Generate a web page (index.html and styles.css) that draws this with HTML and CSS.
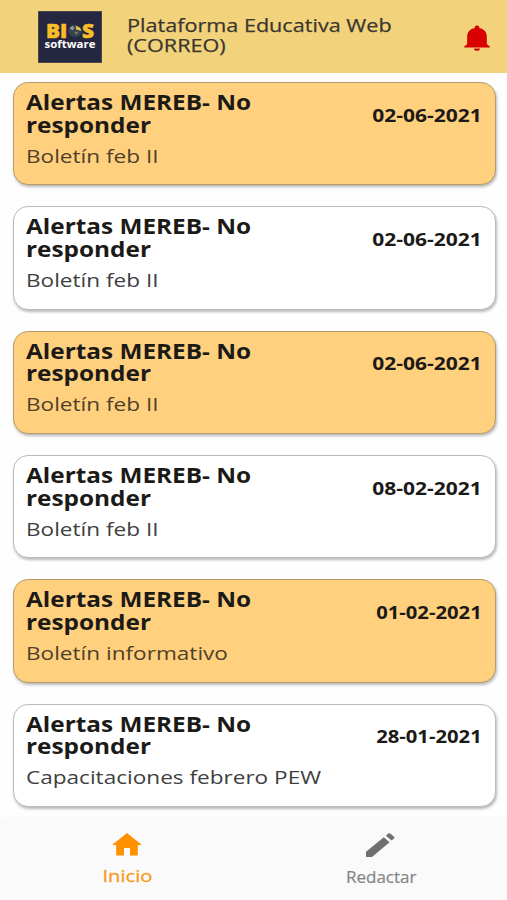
FILE: index.html
```html
<!DOCTYPE html>
<html lang="es">
<head>
    <meta charset="UTF-8">
    <title>Plataforma Educativa Web</title>
    <link rel="stylesheet" href="styles.css">
</head>
<body>
<div class="app">
    <header class="header">
        <div class="logo">
            <div class="bios">
                <span>BI</span>
                <svg class="globe" width="13" height="14" viewBox="0 0 13 13">
                    <circle cx="6.5" cy="6.5" r="6" fill="#34434e"/>
                    <path d="M1.5 3.5L4.5 1L6 4L4 6Z" fill="#8d9597"/>
                    <path d="M7 1L11 3.5L12 6.5L7.5 5Z" fill="#ecc343"/>
                    <path d="M6 7L9.5 7.5L8 10.5L6 9Z" fill="#77745a"/>
                </svg>
                <span>S</span>
            </div>
            <div class="software">software</div>
        </div>
        <h1 class="app-title">Plataforma Educativa Web<br>(CORREO)</h1>
        <svg class="bell" width="26" height="26" viewBox="0 0 26 26">
            <path d="M13 0.5C11.5 0.5 10.7 1.3 10.7 2.5V3C6 4 3.2 7 3.2 11.5V18C3.2 19.5 2.3 20.3 0.2 21.3V22.5H25.8V21.3C23.7 20.3 22.8 19.5 22.8 18V11.5C22.8 7 20 4 15.3 3V2.5C15.3 1.3 14.5 0.5 13 0.5Z"/>
            <path d="M9.8 23.5H16.2C15.9 25 14.7 25.8 13 25.8S10.1 25 9.8 23.5Z"/>
        </svg>
    </header>
    <ul class="list">
        <li class="card unread">
            <div class="info">
                <h2>Alertas MEREB- No<br>responder</h2>
                <p>Boletín feb II</p>
            </div>
            <span class="date">02-06-2021</span>
        </li>
        <li class="card">
            <div class="info">
                <h2>Alertas MEREB- No<br>responder</h2>
                <p>Boletín feb II</p>
            </div>
            <span class="date">02-06-2021</span>
        </li>
        <li class="card unread">
            <div class="info">
                <h2>Alertas MEREB- No<br>responder</h2>
                <p>Boletín feb II</p>
            </div>
            <span class="date">02-06-2021</span>
        </li>
        <li class="card">
            <div class="info">
                <h2>Alertas MEREB- No<br>responder</h2>
                <p>Boletín feb II</p>
            </div>
            <span class="date">08-02-2021</span>
        </li>
        <li class="card unread">
            <div class="info">
                <h2>Alertas MEREB- No<br>responder</h2>
                <p>Boletín informativo</p>
            </div>
            <span class="date short">01-02-2021</span>
        </li>
        <li class="card">
            <div class="info">
                <h2>Alertas MEREB- No<br>responder</h2>
                <p>Capacitaciones febrero PEW</p>
            </div>
            <span class="date short">28-01-2021</span>
        </li>
    </ul>
    <nav class="tabs">
        <a class="tab current">
            <svg width="30" height="23" viewBox="0 0 30 23">
                <path d="M15 0L30 12H25.8V22.6H18V15H12V22.6H4.2V12H0Z"/>
            </svg>
            <span>Inicio</span>
        </a>
        <a class="tab">
            <svg width="29" height="24" viewBox="0 0 29 24">
                <path d="M0 18.7L17.8 4.3L23.6 9.3L6 24H0Z"/>
                <path d="M19.8 2.7L22.3 0.6Q23.2 -0.2 24.3 0.6L28 3.7Q29 4.6 28 5.5L25.6 7.5Z"/>
            </svg>
            <span>Redactar</span>
        </a>
    </nav>
</div>
</body>
</html>
```

FILE: styles.css
```css
* {
    margin: 0;
    padding: 0;
    box-sizing: border-box;
}

ul, li {
    list-style: none;
}

body {
    font-family: "Open Sans", sans-serif;
    background-color: #fefefe;
}

.app {
    display: flex;
    flex-direction: column;
    height: 900px;
    overflow: hidden;
}

.header {
    display: flex;
    flex-shrink: 0;
    align-items: flex-start;
    height: 73px;
    padding: 11px 17px 0 38px;
    background-color: #f2d37b;
}

.logo {
    width: 64px;
    height: 52px;
    padding-top: 11px;
    background-color: #25263f;
    border: 1px solid #4b4848;
}

.bios {
    display: flex;
    align-items: center;
    justify-content: center;
    height: 15px;
    font-size: 18.5px;
    font-weight: 800;
    line-height: 15px;
    color: #f9bd2b;
    -webkit-text-stroke: 0.5px #f9bd2b;
    transform: scaleX(1.13);
}

.software {
    height: 12px;
    font-size: 11px;
    font-weight: 700;
    line-height: 11px;
    text-align: center;
    color: #fff;
    transform: scaleX(1.04);
}

.app-title {
    flex: 1;
    margin: 4px 0 0 25px;
    font-size: 18.5px;
    font-weight: 500;
    line-height: 19.5px;
    color: #3b3630;
    white-space: nowrap;
    -webkit-text-stroke: 0.25px #3b3630;
    transform: scaleX(1.168);
    transform-origin: left;
}

.bell {
    margin-top: 14px;
    fill: #d80000;
}

.list {
    display: flex;
    flex-direction: column;
    flex-shrink: 0;
    gap: 21px;
    height: 745px;
    padding: 9.2px 11px 0 13px;
}

.card {
    display: flex;
    justify-content: space-between;
    flex-shrink: 0;
    height: 103.3px;
    padding: 8px 13px 0 12px;
    background-color: #fff;
    border: 1px solid #bbb;
    border-radius: 15px;
    box-shadow: 1px 2px 3px rgba(0, 0, 0, 0.28);
}

.card.unread {
    background-color: #ffd07e;
    border-color: #b89c6c;
}

.card h2 {
    font-size: 21px;
    font-weight: 700;
    line-height: 22.5px;
    color: #1c1a17;
    white-space: nowrap;
    transform: scaleX(1.16);
    transform-origin: left;
}

.card p {
    margin-top: 7.5px;
    font-size: 18.5px;
    line-height: 24px;
    color: #404040;
    white-space: nowrap;
    transform: scaleX(1.22);
    transform-origin: left;
}

.card.unread p {
    color: #4f4029;
}

.date {
    margin-top: 12.5px;
    font-size: 17px;
    font-weight: 700;
    line-height: 24px;
    color: #1c1a17;
    transform: scaleX(1.235);
    transform-origin: right;
}

.date.short {
    transform: scaleX(1.19);
}

.tabs {
    display: flex;
    flex: 1;
    background-color: #fafafa;
    box-shadow: 0 0 3px rgba(0, 0, 0, 0.03);
}

.tab {
    display: flex;
    flex: 1;
    flex-direction: column;
    align-items: center;
    padding: 15px 0 0 1px;
    font-size: 16.5px;
    font-weight: 500;
    line-height: 20px;
    color: #858585;
}

.tab svg {
    fill: #707070;
}

.tab span {
    margin-top: 10px;
    -webkit-text-stroke: 0.2px;
    transform: scaleX(1.03);
}

.tab.current {
    color: #f99a20;
}

.tab.current svg {
    fill: #ff9100;
}

.tab.current span {
    margin-top: 10px;
    -webkit-text-stroke: 0.3px;
    transform: scaleX(1.22);
}
```
